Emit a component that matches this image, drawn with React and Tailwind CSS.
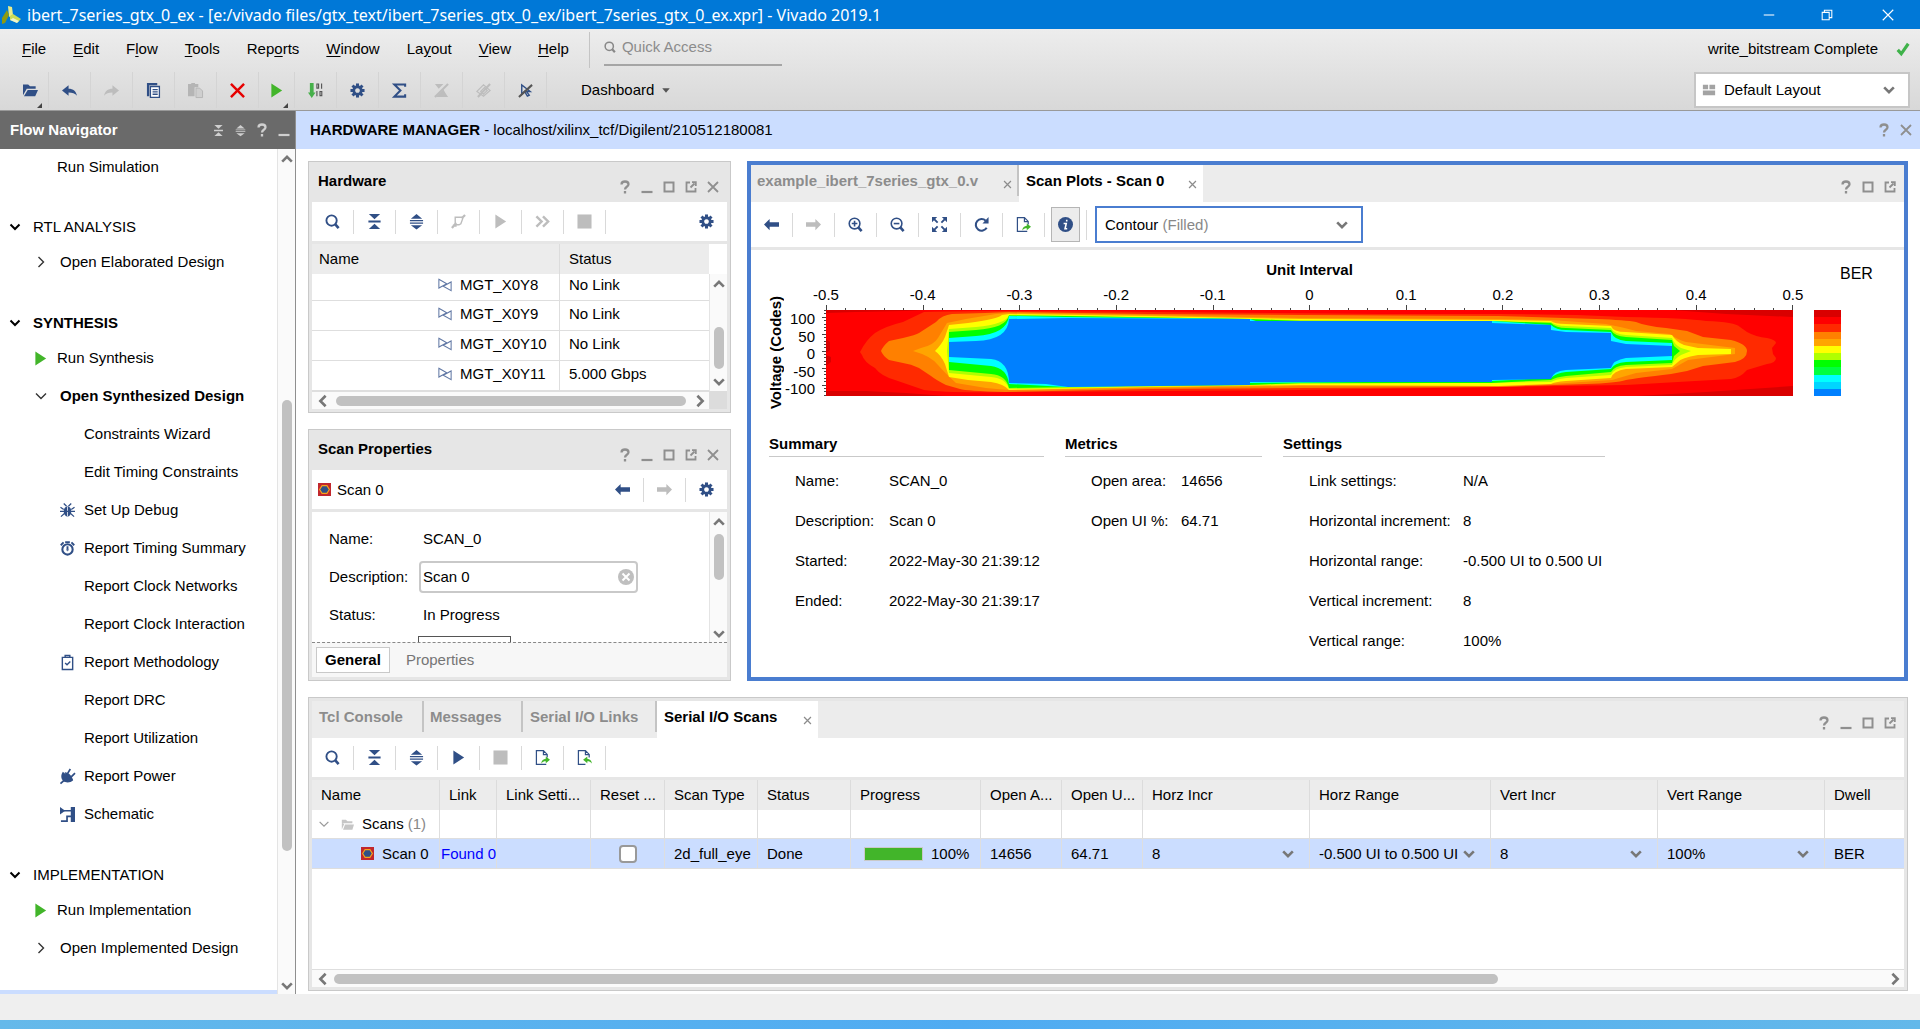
import clsx from 'clsx';

const NAVY = '#304f86';
const GREEN = '#42b52a';

const icons = {
  folder: <path d="M0 1.500h5.500l2 2h6V6H4l-4 7zM5 7.500h11L13 14H1z" fill="currentColor" />,
  undo: <path d="M0 8l7-5.500V6c5 0 8 2.500 9 7.500-2-2.500-5-3.500-9-3.500v3.500z" fill="currentColor" />,
  redo: <path d="M16 8L9 2.500V6c-5 0-8 2.500-9 7.500C2 11 5 10 9 10v3.500z" fill="currentColor" />,
  copy: (
    <>
      <path d="M1 0h11v2.500H3.500V14H1z" fill="currentColor" />
      <path d="M4.700 3.700h9.600v11.600H4.700zM7 7h5.500M7 9.500h5.500M7 12h5.500" fill="#fff" stroke="currentColor" strokeWidth="1.400" />
    </>
  ),
  paste: (
    <>
      <path d="M0 1h3.500V0h4v1H11v3.500H7V14H0z" fill="currentColor" />
      <path d="M8.500 5.500h4l3 3v7h-7z" fill="#cfcfcf" stroke="currentColor" />
    </>
  ),
  remove: <path d="M1 1l14 14M15 1L1 15" stroke="#e60000" strokeWidth="2.600" fill="none" />,
  play: <path d="M2.500 0.500l11.500 7.500-11.500 7.500z" fill="currentColor" />,
  gear: (
    <g fill="currentColor">
      <path d="M8 2.500a5.500 5.500 0 1 0 .01 0zM8 5.500a2.500 2.500 0 1 1-.01 0z" fillRule="evenodd" />
      {[0, 45, 90, 135, 180, 225, 270, 315].map(angle => (
        <path key={angle} d="M6.400 0.500h3.200v3h-3.200z" transform={`rotate(${angle} 8 8)`} />
      ))}
    </g>
  ),
  sigma: <path d="M14 4V1.500H2.500L9 8l-6.500 6.500H14V12" fill="none" stroke="currentColor" strokeWidth="2.200" />,
  bits: (
    <>
      <path d="M2 0h4v10h2l-4 6-4-6h2z" fill="#46b04a" />
      <path d="M9.500 1h1.800v4.500H9.500zM14.500 0.500V6M9.500 8.500V14M12.800 9h1.900v4.500h-1.900z" fill="none" stroke="#555" strokeWidth="1.200" />
    </>
  ),
  noBell: (
    <>
      <path d="M1 1h9L5 6zM2 15l8-8 3 5 2 3z" fill="currentColor" />
      <path d="M1 15L15 1" stroke="currentColor" strokeWidth="2.200" />
    </>
  ),
  noChip: (
    <>
      <path d="M1 9l7-7 7 6-7 6zM5 9l4-4 3 3-4 4z" fill="none" stroke="currentColor" strokeWidth="1.300" />
      <path d="M2 15L15 1" stroke="currentColor" strokeWidth="2.200" />
    </>
  ),
  noCursor: (
    <>
      <path d="M4 2v10l3-3 3 5 2-1-3-4h4z" fill="none" stroke={NAVY} strokeWidth="1.500" />
      <path d="M1 15L15 2" stroke="#555" strokeWidth="2.200" />
    </>
  ),
  search: (
    <g fill="none" stroke="currentColor" strokeWidth="2">
      <circle cx="7" cy="7" r="5.500" />
      <path d="M11 11l3.500 4" strokeWidth="2.800" />
    </g>
  ),
  collapse: <path d="M2 0h12L8 5.500zM1.500 7h13v2h-13zM2 16h12l-6-5.500z" fill="currentColor" />,
  expand: <path d="M2 5L8 0l6 5zM1 6.500h14v1.300H1zM1 9h14v1.300H1zM2 12h12l-6 4.500z" fill="currentColor" />,
  wand: (
    <g fill="none" stroke="currentColor" strokeWidth="1.500">
      <path d="M4.500 3.500h7l1 1.500-2 5.500-2 1H6L4.500 9z" />
      <path d="M12 4l3-3M1 15l4-5M2 12.500h4" strokeWidth="2.400" />
    </g>
  ),
  forward: <path d="M1.500 2.500L7 8l-5.500 5.500M8.500 2.500L14 8l-5.500 5.500" fill="none" stroke="currentColor" strokeWidth="2.600" />,
  stop: <path d="M0.500 0.500h15v15h-15z" fill="currentColor" />,
  left: <path d="M0 8l6-6v3.500h10v5H6V14z" fill="currentColor" />,
  right: <path d="M16 8l-6-6v3.500H0v5h10V14z" fill="currentColor" />,
  zoomIn: (
    <g fill="none" stroke="currentColor" strokeWidth="1.700">
      <circle cx="7" cy="7" r="5.700" />
      <path d="M7 4v6M4 7h6" />
      <path d="M11 11l3.500 4" strokeWidth="2.800" />
    </g>
  ),
  zoomOut: (
    <g fill="none" stroke="currentColor" strokeWidth="1.700">
      <circle cx="7" cy="7" r="5.700" />
      <path d="M4 7h6" />
      <path d="M11 11l3.500 4" strokeWidth="2.800" />
    </g>
  ),
  fit: (
    <>
      <path d="M1 1l5 5M15 1l-5 5M1 15l5-5M15 15l-5-5" stroke="currentColor" strokeWidth="2" />
      <path d="M0 0h5.500L0 5.500zM16 0v5.500L10.500 0zM0 16v-5.500L5.500 16zM16 16h-5.500l5.500-5.500z" fill="currentColor" />
    </>
  ),
  reload: (
    <>
      <path d="M13.500 11.500A6.200 6.200 0 1 1 12.500 4" fill="none" stroke="currentColor" strokeWidth="2.200" />
      <path d="M15.500 0v7H9z" fill="currentColor" />
    </>
  ),
  exportFile: (
    <>
      <path d="M12 15.300H1.500V0.700H9l4 4V8M9 1v4h4" fill="none" stroke={NAVY} strokeWidth="1.300" />
      <path d="M16 10.500L11.500 7v2.200C9 9.500 7 11 6.500 14.500 8 12.500 9.500 12 11.500 12v2.200z" fill={GREEN} />
    </>
  ),
  importFile: (
    <>
      <path d="M9 15.300H1.500V0.700H9l4 4V8M9 1v4h4" fill="none" stroke={NAVY} strokeWidth="1.300" />
      <path d="M6.500 10.500L11 7v2.200c2.500.3 4.500 1.800 5 5.300-1.500-2-3-2.500-5-2.500v2.200z" fill={GREEN} />
    </>
  ),
  help: <path d="M4.500 5.500C4.500 3 6 2.500 8 2.500s3.500 1 3.500 2.800C11.500 8 8 7.500 8 10.500M8 12v2.400" fill="none" stroke="currentColor" strokeWidth="2.300" />,
  minimize: <path d="M2.500 13h11" stroke="currentColor" strokeWidth="2.200" />,
  maximize: <path d="M3.500 3.500h9v9h-9z" fill="none" stroke="currentColor" strokeWidth="2" />,
  popOut: <path d="M7 3.500H3.500v9h9V9M7.500 8.500l4-4M9 3.200h3.800V7" fill="none" stroke="currentColor" strokeWidth="1.800" />,
  close: <path d="M3 3l10 10M13 3L3 13" fill="none" stroke="currentColor" strokeWidth="1.800" />,
  winMin: <path d="M2 8h12" stroke="currentColor" strokeWidth="1.200" />,
  winRestore: <path d="M2.500 5h8v8.500h-8zM5 5V2.500h8.500V11H11" fill="none" stroke="currentColor" strokeWidth="1.200" />,
  winClose: <path d="M2 2l12 12M14 2L2 14" fill="none" stroke="currentColor" strokeWidth="1.300" />,
  chevronDown: <path d="M2.500 5L8 10.500 13.500 5" fill="none" stroke="currentColor" strokeWidth="3" />,
  chevronUp: <path d="M2.500 11L8 5.500 13.500 11" fill="none" stroke="currentColor" strokeWidth="3" />,
  chevronLeft: <path d="M11 2L5 8l6 6" fill="none" stroke="currentColor" strokeWidth="3" />,
  chevronRight: <path d="M5 2l6 6-6 6" fill="none" stroke="currentColor" strokeWidth="3" />,
  thinDown: <path d="M3 5.500L8 10.500l5-5" fill="none" stroke="currentColor" strokeWidth="1.400" />,
  thinRight: <path d="M5.500 3l5 5-5 5" fill="none" stroke="currentColor" strokeWidth="1.400" />,
  boldDown: <path d="M3.500 5.500L8 10l4.500-4.500" fill="none" stroke="currentColor" strokeWidth="2" />,
  caret: <path d="M3 5.500h10l-5 6z" fill="currentColor" />,
  check: <path d="M2 9l4 4.500L14 2" fill="none" stroke="#3fb24a" strokeWidth="3.600" />,
  layout: <path d="M1 2h6v5H1zM8.500 2H15v5H8.500zM1 8.500h14V14H1z" fill="currentColor" />,
  bug: (
    <>
      <ellipse cx="8" cy="9" rx="4" ry="5.500" fill="currentColor" />
      <path d="M8 4v10" stroke="#fff" strokeWidth="0.800" />
      <path d="M4 0.500l3 3M12 0.500l-3 3M0.500 4.500L4 7M15.500 4.500L12 7M0 9h16M1 14.500L5 11M15 14.500L11 11" stroke="currentColor" strokeWidth="1.300" fill="none" />
    </>
  ),
  clock: (
    <g fill="none" stroke="currentColor">
      <circle cx="8" cy="9" r="5.500" strokeWidth="2.200" />
      <path d="M8 5.500V9M5.500 1.200h5M0.800 4.500l3-3M15.200 4.500l-3-3" strokeWidth="2" />
      <circle cx="8" cy="9.500" r="0.800" />
    </g>
  ),
  clipboard: (
    <g fill="none" stroke="currentColor" strokeWidth="1.500">
      <path d="M2.500 2.500h11v13h-11zM5.500 2.500v-2h5v2" />
      <path d="M5.500 8.500l2 2 3.500-3.500" />
    </g>
  ),
  plug: (
    <>
      <path d="M3 3l11 9c-3 3-8 3-10.500.8S0.500 7 3 3z" fill="currentColor" />
      <path d="M5 3.500c3-.5 8 3.500 9 8.500H8z" fill="currentColor" />
      <path d="M8 5l3-5M12 8.500l4-4M4.500 12L0.500 15.500" stroke="currentColor" strokeWidth="1.800" />
    </>
  ),
  schematic: (
    <>
      <path d="M0 0l5.500 4L0 8zM11.500 0h4.500v16h-4.500z" fill="currentColor" />
      <path d="M4 4h8M1 15h6.500v-5H12" fill="none" stroke="currentColor" strokeWidth="1.800" />
    </>
  ),
  transceiver: <path d="M1 1.500l9 5-9 5zM15 4.500v10l-9-5z" fill="none" stroke="#6178a5" strokeWidth="1.200" />,
  scan: (
    <>
      <path d="M0 0h16v16H0z" fill="#c1272d" />
      <path d="M5 3.200h6L14 8l-3 4.800H5L2 8z" fill={NAVY} stroke="#f7a21b" strokeWidth="1.400" />
    </>
  ),
  grayFolder: <path d="M1 2h5l2 2h6v2.500H1zM1 6v8l3-6.500zM5 8h11l-2 6.500H2.500z" fill="#c6c6c6" />,
  clear: (
    <>
      <circle cx="8" cy="8" r="8" fill="#bfbfbf" />
      <path d="M4.500 4.500l7 7M11.500 4.500l-7 7" stroke="#fff" strokeWidth="2" />
    </>
  ),
};

function Icon({ name, className = 'size-4' }) {
  return (
    <svg viewBox="0 0 16 16" className={clsx('shrink-0 overflow-visible', className)} aria-hidden="true">
      {icons[name]}
    </svg>
  );
}

function IconButton({ icon, label, className, size }) {
  return (
    <button type="button" aria-label={label} className={clsx('flex shrink-0 items-center justify-center', className)}>
      <Icon name={icon} className={size} />
    </button>
  );
}

const menus = [
  ['', 'F', 'ile'],
  ['', 'E', 'dit'],
  ['F', 'l', 'ow'],
  ['', 'T', 'ools'],
  ['Rep', 'o', 'rts'],
  ['', 'W', 'indow'],
  ['La', 'y', 'out'],
  ['', 'V', 'iew'],
  ['', 'H', 'elp'],
];

const mainTools = [
  { icon: 'folder', label: 'Open', color: 'text-[#304f86]', more: true },
  { icon: 'undo', label: 'Undo', color: 'text-[#304f86]' },
  { icon: 'redo', label: 'Redo', color: 'text-[#bdbdbd]' },
  { icon: 'copy', label: 'Copy', color: 'text-[#304f86]' },
  { icon: 'paste', label: 'Paste', color: 'text-[#b5b5b5]' },
  { icon: 'remove', label: 'Delete', color: 'text-[#e60000]' },
  { icon: 'play', label: 'Run', color: 'text-[#42b52a]', more: true },
  { icon: 'bits', label: 'Generate bitstream', color: 'text-[#555]' },
  { icon: 'gear', label: 'Settings', color: 'text-[#304f86]' },
  { icon: 'sigma', label: 'Report', color: 'text-[#304f86]' },
  { icon: 'noBell', label: 'Mute', color: 'text-[#bdbdbd]' },
  { icon: 'noChip', label: 'Unmark', color: 'text-[#bdbdbd]' },
  { icon: 'noCursor', label: 'Unselect', color: 'text-[#555]' },
];

function TitleBar() {
  return (
    <header className="flex h-[29px] items-center bg-[#0078d7] text-white">
      <svg viewBox="0 0 20 20" className="ml-0.5 size-5 shrink-0" aria-hidden="true">
        <path d="M6 1l4 1 1 8-4 2z" fill="#e9ed8a" />
        <path d="M7 10l-2-5-5 8v6l3-1z" fill="#8d9a12" />
        <path d="M8 11l3-2 8 5-4 4-7-3z" fill="#c9dc55" />
        <path d="M8 15l7 3 2-2-6-3z" fill="#fff" opacity="0.700" />
      </svg>
      <h1 className="ml-[5px] grow truncate font-['Noto_Sans','Open_Sans',sans-serif] text-base">
        ibert_7series_gtx_0_ex - [e:/vivado files/gtx_text/ibert_7series_gtx_0_ex/ibert_7series_gtx_0_ex.xpr] - Vivado 2019.1
      </h1>
      <IconButton icon="winMin" label="Minimize window" className="h-full w-[58px]" size="size-3.5" />
      <IconButton icon="winRestore" label="Restore window" className="h-full w-[58px]" size="size-3.5" />
      <IconButton icon="winClose" label="Close window" className="h-full w-16" size="size-3.5" />
    </header>
  );
}

function TopBar() {
  return (
    <div className="flex justify-between border-b border-[#999] bg-linear-to-b from-[#ededed] to-[#d8d8d8]">
      <div>
        <div className="flex h-[41px] items-center">
          <nav className="flex gap-[27px] pb-0.5 pl-[22px]">
            {menus.map(([before, key, after]) => (
              <button key={before + key + after} type="button">
                {before}<u className="underline-offset-2">{key}</u>{after}
              </button>
            ))}
          </nav>
          <label className="ml-5 flex h-9 items-center border-l border-[#c4c4c4] pl-3.5 text-[#888]">
            <span className="flex h-8 w-[178px] items-center gap-1.5 border-b-2 border-[#a5a5a5] pb-1">
              <Icon name="search" className="size-3" />
              <input aria-label="Quick Access" placeholder="Quick Access" className="w-32 bg-transparent outline-none placeholder:text-[#8c8c8c]" />
            </span>
          </label>
        </div>
        <div className="flex h-10 items-center pl-[13px]">
          {mainTools.map(tool => (
            <div
              key={tool.icon}
              className={clsx('relative flex h-9 items-center justify-center border-r border-[#d4d4d4]', tool.more ? 'w-9' : 'w-[42px]')}
            >
              <IconButton icon={tool.icon} label={tool.label} className={tool.color} size="size-[15px]" />
              {tool.more && (
                <svg viewBox="0 0 6 6" className="absolute right-1.5 bottom-0 size-[5px]" aria-hidden="true">
                  <path d="M6 0v6H0z" fill="#444" />
                </svg>
              )}
            </div>
          ))}
          <button type="button" className="ml-[34px] flex items-center gap-1.5">
            Dashboard <Icon name="caret" className="size-3 text-[#555]" />
          </button>
        </div>
      </div>
      <div className="flex flex-col items-end pr-2.5">
        <div className="flex h-[41px] items-center gap-[18px] pb-0.5">
          write_bitstream Complete
          <Icon name="check" className="size-3.5" />
        </div>
        <div className="relative my-0.5 flex h-9 w-[216px] items-center border-2 border-[#c6c6c6] bg-white">
          <span className="pl-1.5 text-[#a3a3a3]"><Icon name="layout" className="size-3.5" /></span>
          <select aria-label="Layout" className="h-full grow appearance-none pl-2 outline-none">
            <option>Default Layout</option>
          </select>
          <span className="pointer-events-none absolute right-3 text-[#777]"><Icon name="chevronDown" className="size-3.5" /></span>
        </div>
      </div>
    </div>
  );
}

const navSections = [
  {
    items: [{ label: 'Run Simulation', level: 1 }],
  },
  {
    title: 'RTL ANALYSIS',
    items: [{ label: 'Open Elaborated Design', level: 1, toggle: 'thinRight' }],
  },
  {
    title: 'SYNTHESIS',
    active: true,
    items: [
      { label: 'Run Synthesis', level: 1, icon: 'play' },
      { label: 'Open Synthesized Design', level: 1, toggle: 'thinDown', bold: true },
      { label: 'Constraints Wizard' },
      { label: 'Edit Timing Constraints' },
      { label: 'Set Up Debug', icon: 'bug' },
      { label: 'Report Timing Summary', icon: 'clock' },
      { label: 'Report Clock Networks' },
      { label: 'Report Clock Interaction' },
      { label: 'Report Methodology', icon: 'clipboard' },
      { label: 'Report DRC' },
      { label: 'Report Utilization' },
      { label: 'Report Power', icon: 'plug' },
      { label: 'Schematic', icon: 'schematic' },
    ],
  },
  {
    title: 'IMPLEMENTATION',
    items: [
      { label: 'Run Implementation', level: 1, icon: 'play' },
      { label: 'Open Implemented Design', level: 1, toggle: 'thinRight' },
    ],
  },
];

function NavItem({ label, level, icon, toggle, bold, short }) {
  return (
    <li className={short ? 'h-9' : 'h-[38px]'}>
      <a href="#" className={clsx('flex h-full items-center', bold && 'font-bold', level ? 'pl-[33px]' : 'pl-[60px]')}>
        {toggle ? (
          <span className="flex w-[27px] text-[#333]"><Icon name={toggle} className="size-4" /></span>
        ) : (
          <span className={clsx('flex w-6', level ? 'text-[#42b52a]' : 'text-[#304f86]')}>
            {icon && <Icon name={icon} className="size-[15px]" />}
          </span>
        )}
        {label}
      </a>
    </li>
  );
}

function FlowNavigator() {
  return (
    <aside className="flex w-[296px] shrink-0 flex-col border-r border-[#8f8f8f] bg-white">
      <div className="flex h-[38px] items-center justify-between bg-[#6a6a6a] pl-2.5 text-white">
        <h2 className="font-bold">Flow Navigator</h2>
        <div className="flex text-[#cfcfcf]">
          <IconButton icon="collapse" label="Collapse all" className="w-[22px]" size="size-[11px]" />
          <IconButton icon="expand" label="Expand all" className="w-[22px]" size="size-[11px]" />
          <IconButton icon="help" label="Help" className="w-[22px]" size="size-4" />
          <IconButton icon="minimize" label="Minimize" className="w-[22px]" size="size-4" />
        </div>
      </div>
      <div className="flex grow">
        <nav className="grow border-b-4 border-[#cbddff]">
          {navSections.map(section => (
            <section key={section.title ?? 'simulation'}>
              {section.title && (
                <h3 className={clsx('mt-[26px] flex h-8 items-center gap-2.5 pl-[7px]', section.active && 'font-bold')}>
                  <Icon name="boldDown" className="size-4" />
                  {section.title}
                </h3>
              )}
              <ul>
                {section.items.map(item => <NavItem key={item.label} {...item} short={!section.title} />)}
              </ul>
            </section>
          ))}
        </nav>
        <div className="flex w-[18px] flex-col items-center border-l border-[#e4e4e4] bg-[#fafafa] text-[#777]">
          <IconButton icon="chevronUp" label="Scroll up" className="h-5" size="size-3.5" />
          <div className="mt-[231px] h-[451px] w-2.5 rounded-full bg-[#c1c1c1]" />
          <IconButton icon="chevronDown" label="Scroll down" className="mt-auto h-4" size="size-3.5" />
        </div>
      </div>
    </aside>
  );
}

const windowControls = {
  help: 'Help',
  minimize: 'Minimize',
  maximize: 'Maximize',
  popOut: 'Float',
  close: 'Close',
};

function WindowControls({ names, className }) {
  return (
    <div className={clsx('flex text-[#8f8f8f]', className)}>
      {names.map(name => (
        <IconButton key={name} icon={name} label={windowControls[name]} className="w-[22px]" />
      ))}
    </div>
  );
}

function PanelHeader({ title }) {
  return (
    <div className="flex h-[37px] items-center justify-between pr-[3px] pl-1.5">
      <h2 className="pb-1.5 font-bold">{title}</h2>
      <WindowControls names={['help', 'minimize', 'maximize', 'popOut', 'close']} className="pt-1.5" />
    </div>
  );
}

function Tool({ icon, label, disabled }) {
  return (
    <div className="flex h-6 w-[42px] items-center justify-center border-r border-[#d9d9d9]">
      <IconButton icon={icon} label={label} className={disabled ? 'text-[#bdbdbd]' : 'text-[#304f86]'} size="size-[15px]" />
    </div>
  );
}

function HScroll({ thumb }) {
  return (
    <div className="flex h-[18px] min-w-0 grow items-center border-t border-[#dedede] bg-[#fafafa] text-[#777]">
      <IconButton icon="chevronLeft" label="Scroll left" className="w-[22px]" size="size-3.5" />
      <div className="flex grow">
        <div className={clsx('h-2.5 rounded-full bg-[#c1c1c1]', thumb)} />
      </div>
      <IconButton icon="chevronRight" label="Scroll right" className="w-[18px]" size="size-3.5" />
    </div>
  );
}

const hardwareRows = [
  ['MGT_X0Y8', 'No Link'],
  ['MGT_X0Y9', 'No Link'],
  ['MGT_X0Y10', 'No Link'],
  ['MGT_X0Y11', '5.000 Gbps'],
];

function HardwarePanel() {
  return (
    <section className="border border-[#c9c9c9] bg-[#e6e6e6] p-[3px]">
      <PanelHeader title="Hardware" />
      <div className="flex h-[39px] items-center bg-white">
        <Tool icon="search" label="Search" />
        <Tool icon="collapse" label="Collapse all" />
        <Tool icon="expand" label="Expand all" />
        <Tool icon="wand" label="Auto connect" disabled />
        <Tool icon="play" label="Run trigger" disabled />
        <Tool icon="forward" label="Run immediate" disabled />
        <Tool icon="stop" label="Stop" disabled />
        <IconButton icon="gear" label="Settings" className="mr-[13px] ml-auto text-[#304f86]" size="size-[15px]" />
      </div>
      <div className="mt-[3px] flex bg-white">
        <table className="grow table-fixed border-separate border-spacing-0">
          <thead>
            <tr className="h-[30px] bg-[#ececec] text-left">
              <th className="w-[248px] border-r border-[#dcdcdc] pl-[7px] font-normal">Name</th>
              <th className="pl-[9px] font-normal">Status</th>
            </tr>
          </thead>
          <tbody>
            {hardwareRows.map(([name, status], index) => (
              <tr key={name} className={index ? 'h-[30px]' : 'h-[27px]'}>
                <td className="border-r border-b border-[#dedede] pb-1 pl-[126px]">
                  <span className="flex items-center gap-2"><Icon name="transceiver" className="size-3.5" />{name}</span>
                </td>
                <td className="border-b border-[#dedede] pb-1 pl-[9px]">{status}</td>
              </tr>
            ))}
          </tbody>
        </table>
        <div className="mt-[30px] flex w-[18px] flex-col items-center border-l border-[#e4e4e4] bg-[#fafafa] text-[#777]">
          <IconButton icon="chevronUp" label="Scroll up" className="h-5" size="size-3.5" />
          <div className="mt-auto h-[42px] w-2.5 rounded-full bg-[#c1c1c1]" />
          <IconButton icon="chevronDown" label="Scroll down" className="mt-1 h-[18px]" size="size-3.5" />
        </div>
      </div>
      <div className="flex">
        <HScroll thumb="ml-0.5 w-[350px]" />
        <div className="w-[18px] bg-[#dcdcdc]" />
      </div>
    </section>
  );
}

function ScanPropertiesPanel() {
  return (
    <section className="border border-[#c9c9c9] bg-[#e6e6e6] p-[3px]">
      <PanelHeader title="Scan Properties" />
      <div className="flex h-[39px] items-center bg-white pl-1.5">
        <Icon name="scan" className="size-[13px]" />
        <span className="ml-1.5 grow">Scan 0</span>
        <Tool icon="left" label="Back" />
        <Tool icon="right" label="Forward" disabled />
        <IconButton icon="gear" label="Settings" className="mx-[13px] text-[#304f86]" size="size-[15px]" />
      </div>
      <div className="mt-[3px] flex h-[130px] overflow-hidden bg-white">
        <div className="grow pt-2 pl-[17px]">
          <div className="flex h-[38px] items-center">
            <span className="w-[94px]">Name:</span>SCAN_0
          </div>
          <div className="flex h-[38px] items-center">
            <label htmlFor="description" className="w-[90px]">Description:</label>
            <div className="flex h-8 w-[219px] items-center rounded-sm border-2 border-[#c9c9c9] px-0.5">
              <input id="description" defaultValue="Scan 0" className="w-full min-w-0 outline-none" />
              <IconButton icon="clear" label="Clear description" />
            </div>
          </div>
          <div className="flex h-[38px] items-center">
            <span className="w-[94px]">Status:</span>In Progress
          </div>
          <div className="mt-0.5 ml-[89px] h-8 w-[93px] border border-[#555]" />
        </div>
        <div className="flex w-[18px] flex-col items-center border-l border-[#e4e4e4] bg-[#fafafa] text-[#777]">
          <IconButton icon="chevronUp" label="Scroll up" className="h-5" size="size-3.5" />
          <div className="mt-0.5 h-[46px] w-2.5 rounded-full bg-[#c1c1c1]" />
          <IconButton icon="chevronDown" label="Scroll down" className="mt-auto h-4" size="size-3.5" />
        </div>
      </div>
      <div className="flex h-[35px] items-center gap-4 border-t border-dashed border-[#888] bg-[#f7f7f7] pl-1">
        <button type="button" className="h-[26px] border border-[#c9c9c9] bg-white px-2 font-bold">General</button>
        <button type="button" className="text-[#757575]">Properties</button>
      </div>
    </section>
  );
}

function Tab({ children, active, closable, className }) {
  return (
    <div
      className={clsx(
        'flex pt-2 font-bold',
        active ? 'bg-white' : 'mb-1.5 border-r-2 border-[#c4c4c4] text-[#8c8c8c]',
        className,
      )}
    >
      <button type="button" className="h-4 leading-4 font-bold">{children}</button>
      {closable && <IconButton icon="close" label="Close tab" className="mt-[3px] ml-auto h-4 text-[#8c8c8c]" size="size-[11px]" />}
    </div>
  );
}

// Filled contour levels of the eye, outermost first, on a 967 x 86 grid
const contours = [
  { fill: '#d90000', d: 'M0 0H100L80 1 30 2 0 3ZM0 86H120L80 83 40 81 0 81ZM846 0H967V7L900 4ZM810 86L880 82 967 76V86ZM0 29L4 32 4 40 0 43ZM0 45L5 47 5 52 0 56Z' },
  { fill: '#ff2a00', d: 'M34 42Q40 30 49 23Q60 16 77 12L98 2Q160 0 322 2L554 4 672 4 751 5 800 7Q860 8 880 11Q909 12 914 17L921 22 Q930 27 941 28Q950 30 950 33L946 38 947 44 950 48Q950 53 941 54L921 60Q914 68 905 69L869 71 800 75 672 77 474 80 183 82Q120 83 98 80L69 70Q55 66 49 58Q38 52 36 45Z' },
  { fill: '#ff8000', d: 'M55 41Q57 36 63 31L77 28Q90 25 93 23L110 12Q116 5 126 4L159 3 183 2 322 4 474 5 672 6 770 9Q800 10 810 12Q820 16 840 18L861 21 877 27 905 30Q921 34 921 41Q921 49 909 52L877 56 861 61 845 64Q810 68 800 70Q790 73 760 74L672 77 474 78 322 79 179 82Q140 81 134 79L120 75Q110 70 105 66L93 58Q85 54 77 53L63 50Q57 46 55 41Z' },
  { fill: '#ffa500', d: 'M87 41L95 38Q108 35 112 28L121 13 140 9 170 4 183 3 322 5 474 8 672 9 725 10 780 14Q800 18 810 21L844 24Q852 30 860 32L909 38V44L862 50 846 59 810 63 786 70 725 74 672 76 474 76 322 78 183 80Q170 79 160 78L130 73Q118 62 112 55Q105 46 87 41Z' },
  { fill: '#ffff00', d: 'M109 41Q116 34 119 27L123 15 142 13Q172 9 176 5L183 4 322 6 474 9 672 10 725 11Q728 14 740 14L785 16Q787 22 800 22L846 25Q850 32 858 35L872 38 905 39V44L872 45Q855 48 852 52L846 57 800 59Q787 61 785 68L740 71Q728 72 725 74L672 76 474 75 322 77 183 80Q178 74 165 72L142 70 123 67 119 54Q115 45 109 41Z' },
  { fill: '#b0ff00', d: 'M121 41L123 19 150 17Q180 14 183 5L250 6 424 9 474 10 725 12Q730 16 740 16L785 18Q788 24 800 25L846 28Q848 34 855 38L865 41 855 45Q848 49 846 55L800 57Q788 58 785 65L740 68Q730 69 725 72L474 74 424 75 300 77 183 79Q180 68 165 67L123 63Z' },
  { fill: '#00ff00', d: 'M123 22L150 20Q180 18 183 5.500L240 6 424 9 474 11 666 11 725 13Q730 18 740 18L785 20Q788 26 800 27L846 30 848 36 854 41 848 46 846 53 800 55Q788 56 785 62L740 66Q730 67 725 70L666 73 474 73 424 75 300 76 183 78Q180 65 165 64L123 60Z' },
  { fill: '#00ffff', d: 'M123 28L150 26Q181 24 183 6L240 7 424 9 430 11 666 11 725 15Q730 20 740 20L785 22Q788 30 800 31L846 33V50L800 52Q788 53 785 59L740 62Q730 63 725 68L666 71 424 73 300 76 240 77 183 74Q181 58 165 56L123 52Z' },
  { fill: '#0080ff', d: 'M123 32L150 31Q182 30 183 9L242 8 424 9V11H666V13L725 15V20L740 22 785 23V31L800 34 846 36V46L800 48Q787 50 785 58L740 60Q727 61 725 69L666 70V72H424V75L242 77 220 74 183 73Q183 51 165 49L123 47Z' },
];

const legendColors = ['#d90000', '#ff0000', '#ff2a00', '#ff8000', '#ffa500', '#ffff00', '#b0ff00', '#00ff00', '#00ff40', '#00ffff', '#00d5ff', '#0080ff'];

const xLabels = ['-0.5', '-0.4', '-0.3', '-0.2', '-0.1', '0', '0.1', '0.2', '0.3', '0.4', '0.5'];
const yLabels = ['100', '50', '0', '-50', '-100'];

function EyePlot() {
  return (
    <div className="pt-2.5">
      <div className="flex h-[35px] pr-[111px] pl-[75px]">
        <div className="grow text-center font-bold">Unit Interval</div>
        <div className="w-0">
          <div className="w-16 pt-1 pl-[47px] text-base leading-5">BER</div>
        </div>
      </div>
      <div className="-mt-2.5 flex h-5 justify-between pr-[111px] pl-[75px]">
        {xLabels.map(label => <span key={label} className="flex w-0 items-center justify-center">{label}</span>)}
      </div>
      <div className="flex h-[5px] items-end justify-between pr-[111px] pl-[75px]">
        {Array.from({ length: 51 }, (_, i) => (
          <span key={i} className={clsx('-mr-px w-px bg-[#444]', i % 5 ? 'h-0.5' : 'h-[5px]')} />
        ))}
      </div>
      <div className="flex h-[86px]">
        <div className="flex w-[75px] shrink-0 items-center">
          <span className="ml-4 w-[18px] shrink-0 rotate-180 leading-[18px] font-bold whitespace-nowrap [writing-mode:vertical-rl]">Voltage (Codes)</span>
          <div className="mt-[9px] mb-[7px] ml-auto flex flex-col justify-between self-stretch pr-[7px]">
            {yLabels.map(label => <span key={label} className="flex h-0 items-center justify-end">{label}</span>)}
          </div>
          <div className="flex flex-col items-end justify-between self-stretch">
            {Array.from({ length: 26 }, (_, i) => (
              <span key={i} className={clsx('h-px bg-[#444]', i % 5 === 2 ? 'w-1' : 'w-0.5')} />
            ))}
          </div>
        </div>
        <svg viewBox="0 0 967 86" preserveAspectRatio="none" className="h-full min-w-0 grow bg-[#ff0000]" role="img" aria-label="Eye scan contour">
          {contours.map(level => <path key={level.fill} d={level.d} fill={level.fill} />)}
        </svg>
        <div className="mr-[63px] ml-[21px] flex w-[27px] shrink-0 flex-col">
          {legendColors.map(color => <span key={color} className="grow" style={{ background: color }} />)}
        </div>
      </div>
    </div>
  );
}

function InfoGroup({ title, rows, className, columns }) {
  return (
    <section className={className}>
      <h3 className="h-[25px] border-b border-[#c9c9c9] leading-6 font-bold">{title}</h3>
      <dl className={clsx('grid pt-1 pl-[26px]', columns)}>
        {rows.map(([label, value]) => (
          <div key={label} className="col-span-2 grid h-10 grid-cols-subgrid items-center">
            <dt>{label}</dt>
            <dd className="whitespace-nowrap">{value}</dd>
          </div>
        ))}
      </dl>
    </section>
  );
}

function ScanPlotsPanel() {
  return (
    <section className="flex min-w-0 grow flex-col border-4 border-[#4a7dd0] bg-white">
      <div className="flex h-[37px] bg-[#ececec]">
        <Tab closable className="w-[268px] pr-1 pl-1.5">example_ibert_7series_gtx_0.v</Tab>
        <Tab active closable className="w-[184px] pr-[5px] pl-[7px]">Scan Plots - Scan 0</Tab>
        <WindowControls names={['help', 'maximize', 'popOut']} className="mr-[3px] ml-auto pt-1.5" />
      </div>
      <div className="flex h-12 items-center border-b-3 border-[#e6e6e6]">
        <Tool icon="left" label="Back" />
        <Tool icon="right" label="Forward" disabled />
        <Tool icon="zoomIn" label="Zoom in" />
        <Tool icon="zoomOut" label="Zoom out" />
        <Tool icon="fit" label="Zoom fit" />
        <Tool icon="reload" label="Refresh" />
        <Tool icon="exportFile" label="Export" />
        <div className="flex h-[30px] w-[42px] items-center justify-center border-r border-[#d9d9d9]">
          <button type="button" aria-label="Scan details" aria-pressed="true" className="flex h-[35px] w-[29px] items-center justify-center border border-[#b5b5b5] bg-[#ececec]">
            <svg viewBox="0 0 16 16" className="size-[15px]" aria-hidden="true">
              <circle cx="8" cy="8" r="8" fill={NAVY} />
              <path d="M9.300 3v1.800M6 7h2.800l-1.300 5.500h2.300" fill="none" stroke="#fff" strokeWidth="1.700" />
            </svg>
          </button>
        </div>
        <div className="relative ml-2 flex h-[37px] w-[268px] items-center justify-between border-2 border-[#4a7dd0] px-2">
          <span aria-hidden="true">Contour <span className="text-[#888]">(Filled)</span></span>
          <span className="mr-1 text-[#777]"><Icon name="chevronDown" className="size-3.5" /></span>
          <select aria-label="Plot type" className="absolute inset-0 appearance-none opacity-0">
            <option>Contour (Filled)</option>
          </select>
        </div>
      </div>
      <EyePlot />
      <div className="mt-9 flex gap-[21px] pl-[18px]">
        <InfoGroup
          title="Summary"
          className="w-[275px]"
          columns="grid-cols-[94px_auto]"
          rows={[
            ['Name:', 'SCAN_0'],
            ['Description:', 'Scan 0'],
            ['Started:', '2022-May-30 21:39:12'],
            ['Ended:', '2022-May-30 21:39:17'],
          ]}
        />
        <InfoGroup
          title="Metrics"
          className="w-[197px]"
          columns="grid-cols-[90px_auto]"
          rows={[
            ['Open area:', '14656'],
            ['Open UI %:', '64.71'],
          ]}
        />
        <InfoGroup
          title="Settings"
          className="w-[322px]"
          columns="grid-cols-[154px_auto]"
          rows={[
            ['Link settings:', 'N/A'],
            ['Horizontal increment:', '8'],
            ['Horizontal range:', '-0.500 UI to 0.500 UI'],
            ['Vertical increment:', '8'],
            ['Vertical range:', '100%'],
          ]}
        />
      </div>
    </section>
  );
}

const scanColumns = [
  ['Name', 'w-[128px]'],
  ['Link', 'w-[57px]'],
  ['Link Setti...', 'w-[94px]'],
  ['Reset ...', 'w-[74px]'],
  ['Scan Type', 'w-[93px]'],
  ['Status', 'w-[93px]'],
  ['Progress', 'w-[130px]'],
  ['Open A...', 'w-[81px]'],
  ['Open U...', 'w-[81px]'],
  ['Horz Incr', 'w-[167px]'],
  ['Horz Range', 'w-[181px]'],
  ['Vert Incr', 'w-[167px]'],
  ['Vert Range', 'w-[167px]'],
  ['Dwell', 'w-auto'],
];

function SelectCell({ label, value }) {
  return (
    <td className="relative border-r border-b border-[#dedede]">
      <select aria-label={label} defaultValue={value} className="w-full appearance-none pl-[9px] outline-none">
        <option>{value}</option>
      </select>
      <span className="pointer-events-none absolute top-2 right-3.5 text-[#777]"><Icon name="chevronDown" className="size-3.5" /></span>
    </td>
  );
}

function ScansPanel() {
  const cell = 'border-r border-b border-[#dedede] pl-[9px]';

  return (
    <section className="mt-4 flex grow flex-col border border-[#c9c9c9] bg-[#e6e6e6] p-[3px]">
      <div className="flex h-[37px] bg-[#ececec]">
        <Tab className="w-[112px] pl-[7px]">Tcl Console</Tab>
        <Tab className="w-[99px] pl-1.5">Messages</Tab>
        <Tab className="w-[134px] pl-[7px]">Serial I/O Links</Tab>
        <Tab active closable className="w-[161px] pr-[5px] pl-[7px]">Serial I/O Scans</Tab>
        <WindowControls names={['help', 'minimize', 'maximize', 'popOut']} className="mr-[3px] ml-auto pt-1.5" />
      </div>
      <div className="mb-[3px] flex h-[39px] items-center bg-white">
        <Tool icon="search" label="Search" />
        <Tool icon="collapse" label="Collapse all" />
        <Tool icon="expand" label="Expand all" />
        <Tool icon="play" label="Run scan" />
        <Tool icon="stop" label="Stop scan" disabled />
        <Tool icon="exportFile" label="Write scan" />
        <Tool icon="importFile" label="Read scan" />
      </div>
      <div className="grow bg-white">
        <table className="w-full table-fixed border-separate border-spacing-0 whitespace-nowrap">
          <thead>
            <tr className="h-[30px] bg-[#ececec] text-left">
              {scanColumns.map(([name, width]) => (
                <th key={name} className={clsx('border-r border-[#dcdcdc] pl-[9px] font-normal last:border-r-0', width)}>{name}</th>
              ))}
            </tr>
          </thead>
          <tbody>
            <tr className="h-[29px]">
              <td className="border-r border-b border-[#dedede] pl-[5px]">
                <span className="flex items-center">
                  <Icon name="thinDown" className="size-3.5 text-[#999]" />
                  <Icon name="grayFolder" className="mr-2 ml-2.5 size-[13px]" />
                  Scans <span className="ml-1 text-[#888]">(1)</span>
                </span>
              </td>
              {scanColumns.slice(1).map(([name]) => (
                <td key={name} className="border-r border-b border-[#dedede] last:border-r-0" />
              ))}
            </tr>
            <tr className="h-[30px] bg-[#cbddff]">
              <td className="border-r border-b border-[#dedede] pl-[49px]">
                <span className="flex items-center gap-2"><Icon name="scan" className="size-[13px]" />Scan 0</span>
              </td>
              <td className="border-r border-b border-[#dedede] pl-px"><a href="#" className="text-[#0000ff]">Found 0</a></td>
              <td className={cell} />
              <td className="border-r border-b border-[#dedede]">
                <input type="checkbox" aria-label="Reset RX" className="mx-auto block size-[18px] appearance-none rounded border-2 border-[#999] bg-white" />
              </td>
              <td className={cell}>2d_full_eye</td>
              <td className={cell}>Done</td>
              <td className="border-r border-b border-[#dedede] pl-[13px]">
                <span className="flex items-center gap-2">
                  <span className="h-3.5 w-[59px] border border-[#c9c9c9] bg-[#42b52a]" />100%
                </span>
              </td>
              <td className={cell}>14656</td>
              <td className={cell}>64.71</td>
              <SelectCell label="Horz Incr" value="8" />
              <SelectCell label="Horz Range" value="-0.500 UI to 0.500 UI" />
              <SelectCell label="Vert Incr" value="8" />
              <SelectCell label="Vert Range" value="100%" />
              <td className="border-b border-[#dedede] pl-[9px]">BER</td>
            </tr>
          </tbody>
        </table>
      </div>
      <div className="flex">
        <HScroll thumb="w-3/4" />
      </div>
    </section>
  );
}

export default function App() {
  return (
    <div className="flex min-h-screen flex-col bg-white font-['Liberation_Sans',Arial,sans-serif] text-[15px] leading-5 text-black">
      <TitleBar />
      <TopBar />
      <div className="flex grow">
        <FlowNavigator />
        <main className="flex min-w-0 grow flex-col">
          <div className="flex h-[38px] items-center bg-[#cbddff] pr-[3px] pl-3.5">
            <h2 className="grow"><b>HARDWARE MANAGER</b> - localhost/xilinx_tcf/Digilent/210512180081</h2>
            <WindowControls names={['help', 'close']} />
          </div>
          <div className="flex grow flex-col px-3 pt-3 pb-[3px]">
            <div className="flex gap-4">
              <div className="flex w-[423px] shrink-0 flex-col gap-4">
                <HardwarePanel />
                <ScanPropertiesPanel />
              </div>
              <ScanPlotsPanel />
            </div>
            <ScansPanel />
          </div>
        </main>
      </div>
      <footer>
        <div className="h-[26px] bg-[#efefef]" />
        <div className="h-[9px] bg-linear-to-r from-[#65b9ea] via-[#4fabf2] to-[#63b8ea]" />
      </footer>
    </div>
  );
}
